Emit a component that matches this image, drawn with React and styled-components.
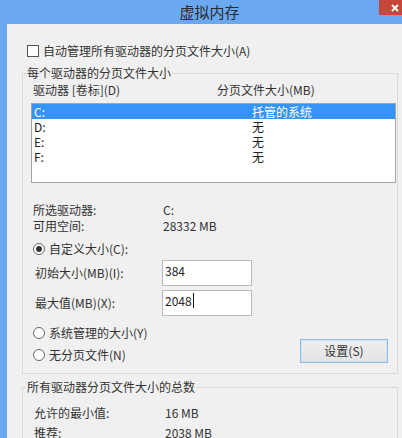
import React from "react";
import styled, { createGlobalStyle } from "styled-components";

const GlobalStyle = createGlobalStyle`
  body {
    margin: 0;
    font-family: "Noto Sans CJK SC", "Microsoft YaHei", sans-serif;
    font-size: 12px;
    line-height: 16px;
    color: #333;
  }
`;

const drives = [
  { name: "C:", size: "托管的系统", selected: true },
  { name: "D:", size: "无" },
  { name: "E:", size: "无" },
  { name: "F:", size: "无" },
];

const App = () => {
  return (
    <Window>
      <GlobalStyle />
      <TitleBar>
        <Title>虚拟内存</Title>
        <CloseButton>
          <svg width="8" height="8" viewBox="0 0 8 8">
            <path d="M1 1 L7 7 M7 1 L1 7" stroke="#fff" strokeWidth="1.8" />
          </svg>
        </CloseButton>
      </TitleBar>
      <Client>
        <CheckRow>
          <CheckBox />
          自动管理所有驱动器的分页文件大小(A)
        </CheckRow>

        <Group $mt={6}>
          <Legend>每个驱动器的分页文件大小</Legend>
          <HeaderRow>
            <span>驱动器 [卷标](D)</span>
            <span>分页文件大小(MB)</span>
          </HeaderRow>
          <ListBox>
            {drives.map((d) => (
              <ListRow key={d.name} $selected={d.selected}>
                <span>{d.name}</span>
                <span>{d.size}</span>
              </ListRow>
            ))}
          </ListBox>

          <InfoGrid $mt={19} $col={130} $pl={10} $gap={0}>
            <span>所选驱动器:</span>
            <span>C:</span>
            <span>可用空间:</span>
            <span>28332 MB</span>
          </InfoGrid>

          <RadioRow $mt={7}>
            <Radio $checked />
            自定义大小(C):
          </RadioRow>

          <FieldRow $mt={3}>
            <span>初始大小(MB)(I):</span>
            <TextBox>384</TextBox>
          </FieldRow>
          <FieldRow $mt={4}>
            <span>最大值(MB)(X):</span>
            <TextBox>
              2048
              <Caret />
            </TextBox>
          </FieldRow>

          <BottomRow>
            <RadioColumn>
              <RadioRow>
                <Radio />
                系统管理的大小(Y)
              </RadioRow>
              <RadioRow>
                <Radio />
                无分页文件(N)
              </RadioRow>
            </RadioColumn>
            <Button>设置(S)</Button>
          </BottomRow>
        </Group>

        <Group $mt={5}>
          <Legend>所有驱动器分页文件大小的总数</Legend>
          <InfoGrid $mt={10} $col={131} $pl={11} $gap={4}>
            <span>允许的最小值:</span>
            <span>16 MB</span>
            <span>推荐:</span>
            <span>2038 MB</span>
          </InfoGrid>
        </Group>
      </Client>
    </Window>
  );
};

export default App;

const Window = styled.div`
  width: 402px;
  height: 438px;
  overflow: hidden;
  background: #6aa8f0;
  display: flex;
  flex-direction: column;
`;

const TitleBar = styled.div`
  height: 24px;
  flex-shrink: 0;
  display: flex;
  align-items: flex-start;
`;

const Title = styled.div`
  flex: 1;
  padding-left: 40px;
  text-align: center;
  font-size: 15px;
  line-height: 24px;
  color: #2b2b2b;
`;

const CloseButton = styled.div`
  width: 32px;
  height: 15px;
  margin-right: -9px;
  flex-shrink: 0;
  background: #c8473d;
  display: flex;
  align-items: center;
  justify-content: center;
`;

const Client = styled.div`
  flex: 1;
  margin-left: 7px;
  background: #f0f0f0;
  padding: 19px 0 0 15px;
  display: flex;
  flex-direction: column;
  align-items: flex-start;
`;

const CheckRow = styled.div`
  display: flex;
  align-items: center;
  gap: 4px;
  height: 16px;
  padding-left: 5px;
`;

const CheckBox = styled.span`
  width: 12px;
  height: 12px;
  box-sizing: border-box;
  border: 1px solid #555;
  background: #fff;
`;

const Group = styled.fieldset`
  margin: ${(p) => p.$mt}px 0 0 0;
  padding: 0;
  width: 376px;
  box-sizing: border-box;
  min-width: 0;
  border: 1px solid #d9d9d9;
  display: flex;
  flex-direction: column;
  align-items: flex-start;
`;

const Legend = styled.legend`
  margin-left: 3px;
  padding: 0 1px;
  line-height: 16px;
  color: #333;
`;

const HeaderRow = styled.div`
  margin-top: 1px;
  padding-left: 10px;
  display: grid;
  grid-template-columns: 184px auto;
  height: 16px;
`;

const ListBox = styled.div`
  margin: 5px 0 0 8px;
  width: 365px;
  height: 80px;
  box-sizing: border-box;
  border: 1px solid #a3a3a3;
  background: #fff;
`;

const ListRow = styled.div`
  height: 15px;
  line-height: 15px;
  padding-left: 2px;
  display: grid;
  grid-template-columns: 218px auto;
  background: ${(p) => (p.$selected ? "#3595f6" : "transparent")};
  color: ${(p) => (p.$selected ? "#fff" : "#222")};
`;

const InfoGrid = styled.div`
  margin-top: ${(p) => p.$mt}px;
  padding-left: ${(p) => p.$pl}px;
  display: grid;
  grid-template-columns: ${(p) => p.$col}px auto;
  row-gap: ${(p) => p.$gap}px;
  color: #333;
`;

const RadioRow = styled.div`
  margin-top: ${(p) => p.$mt || 0}px;
  padding-left: 10px;
  display: flex;
  align-items: center;
  gap: 4px;
  height: 16px;
`;

const Radio = styled.span`
  width: 12px;
  height: 12px;
  box-sizing: border-box;
  border: 1px solid #666;
  border-radius: 50%;
  background: #fff;
  display: flex;
  align-items: center;
  justify-content: center;

  &::after {
    content: "";
    width: 6px;
    height: 6px;
    border-radius: 50%;
    background: #333;
    display: ${(p) => (p.$checked ? "block" : "none")};
  }
`;

const FieldRow = styled.div`
  margin-top: ${(p) => p.$mt}px;
  padding-left: 12px;
  display: grid;
  grid-template-columns: 127px 90px;
  align-items: center;
  height: 26px;
`;

const TextBox = styled.div`
  height: 26px;
  box-sizing: border-box;
  border: 1px solid #b5b8c0;
  background: #fff;
  padding: 2px 2px 0 2px;
  display: flex;
  align-items: flex-start;
  color: #222;
`;

const Caret = styled.span`
  width: 1px;
  height: 15px;
  margin-left: 1px;
  background: #111;
`;

const BottomRow = styled.div`
  margin-top: 9px;
  width: 100%;
  box-sizing: border-box;
  padding: 0 9px 10px 0;
  display: flex;
  justify-content: space-between;
  align-items: flex-end;
`;

const RadioColumn = styled.div`
  display: flex;
  flex-direction: column;
  gap: 6px;
  align-self: flex-start;
`;

const Button = styled.div`
  width: 88px;
  height: 24px;
  box-sizing: border-box;
  border: 1px solid #8fbde3;
  box-shadow: inset 0 0 0 1px #cfe3f3;
  background: linear-gradient(#efefef, #e4e4e4);
  display: flex;
  align-items: center;
  justify-content: center;
  color: #333;
`;
